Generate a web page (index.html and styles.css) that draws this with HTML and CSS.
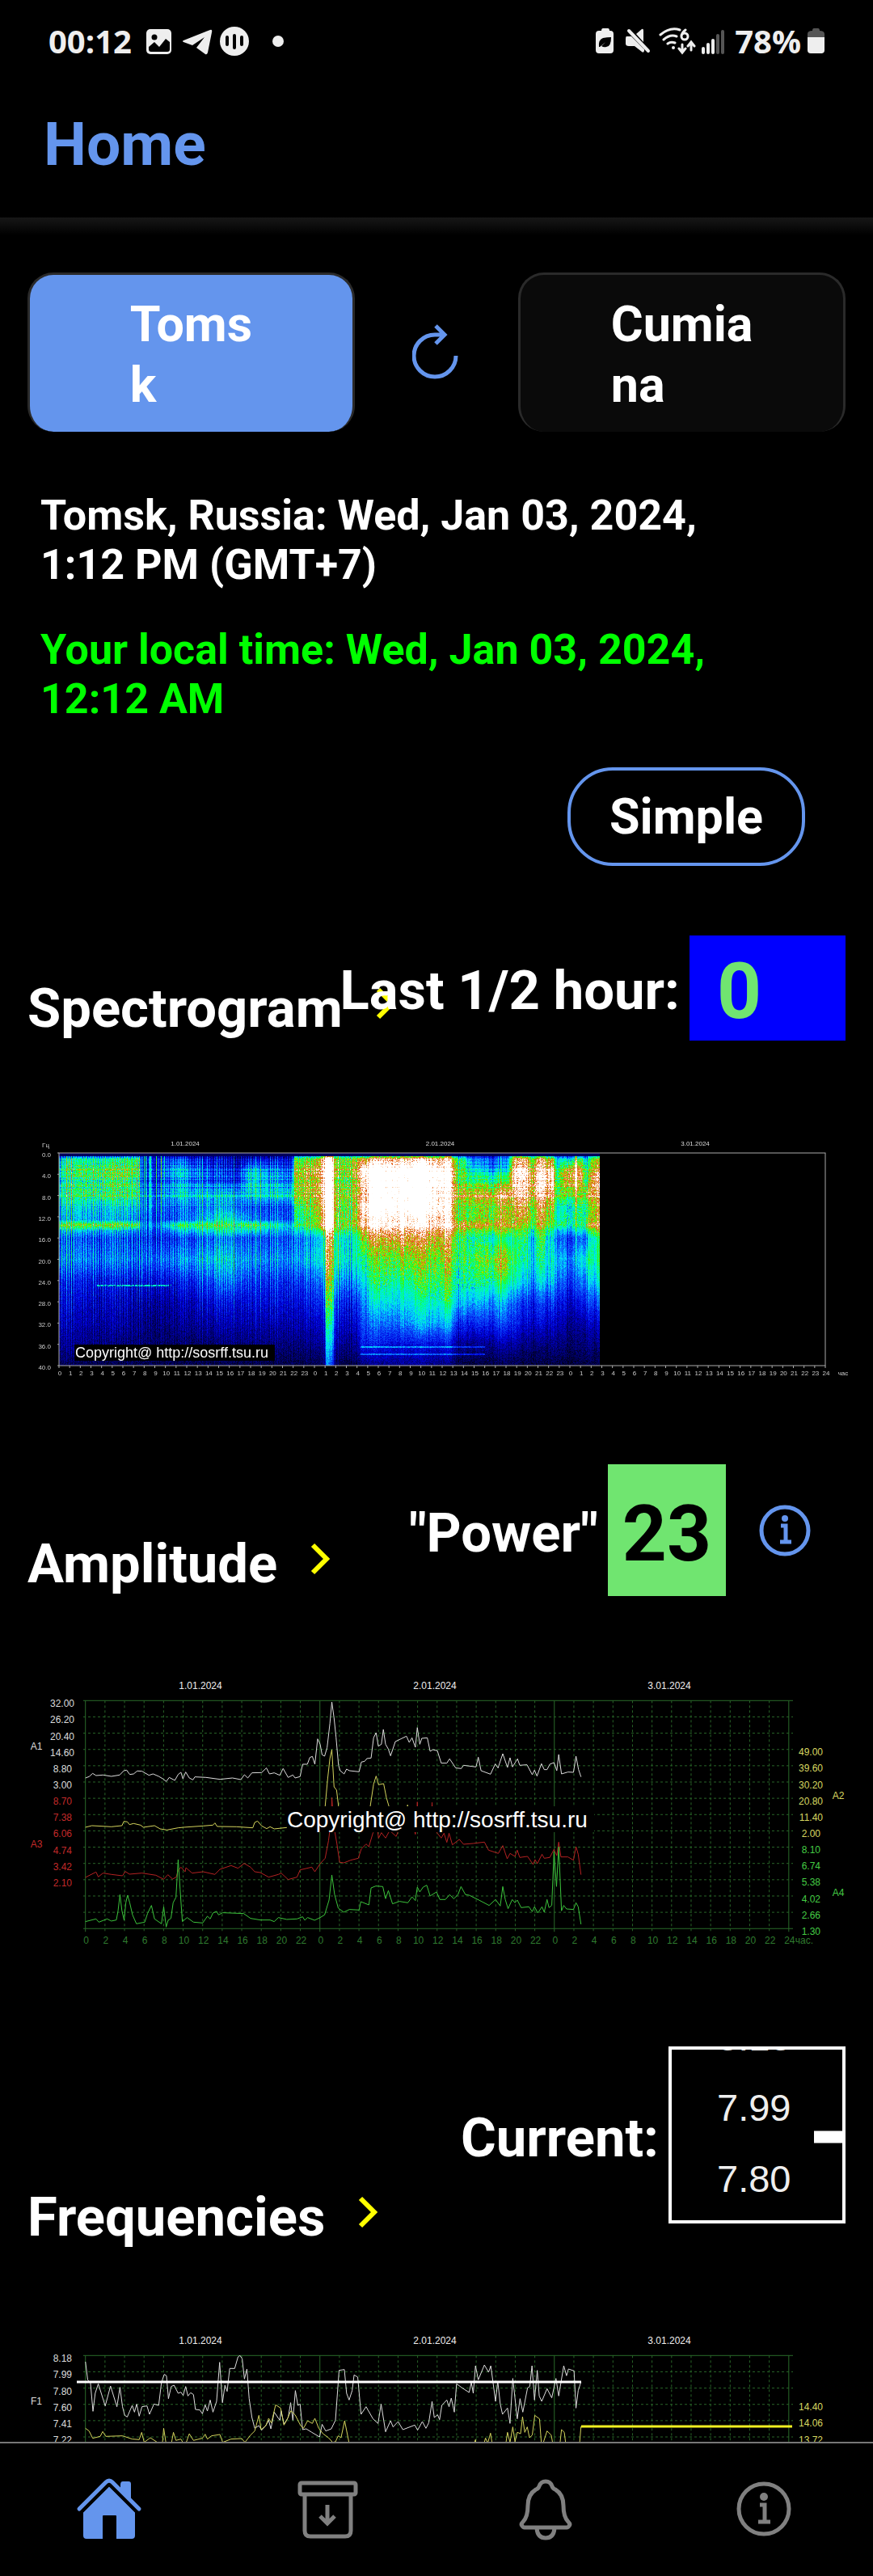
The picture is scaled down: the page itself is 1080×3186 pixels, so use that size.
FILE: index.html
```html
<!DOCTYPE html>
<html lang="en">
<head>
	<meta charset="UTF-8">
	<meta name="viewport" content="width=device-width">
	<title>Home</title>
	<link rel="stylesheet" href="styles.css">
</head>
<body>
	<div class="screen">
		<div class="status">
			<div class="status-side">
				<span class="status-text">00:12</span>
				<svg class="status-notes" width="172" height="40" viewBox="0 0 172 40">
					<rect x="0" y="5" width="31" height="31" rx="5"/>
					<circle class="hole" cx="10" cy="15" r="3.500"/>
					<path class="hole" d="M3 27l7-6 6 6 8-10 5 4v9q0 3-3 3H6q-3 0-3-3z"/>
					<path d="M46 19L79 6q3-1 2 3l-5 25q-1 3-3 2l-11-8 10-13-15 10-11-4q-2-1 0-2z"/>
					<circle cx="109" cy="20" r="18"/>
					<path class="bars" d="M100 15v9M109 13v15M118 15v9"/>
					<circle cx="163" cy="20" r="7"/>
				</svg>
			</div>
			<div class="status-side">
				<svg width="164" height="36" viewBox="0 0 164 36">
					<path d="M9 2h6q2 0 2 3h1q4 0 4 4v20q0 4-4 4H4q-4 0-4-4V9q0-4 4-4h3q0-3 2-3z"/>
					<path class="hole" d="M4 25q-1-9 5-11 5-1 10-1 0 12-6 12-3 1-6-1l5-5-7 6z"/>
					<path d="M38 12h6l16 16v2q-1 3-3 1l-9-7h-7q-4 0-4-3v-6q0-3 1-3zM50 9l7-6q2-1 2 2v14z"/>
					<path class="thin" d="M41 5l24 25"/>
					<path class="thin wifi" d="M80 10q12-10 24-6M84 16q8-7 16-4M89 21q4-3 9-1M111 4q-5 4-5 8m0 0a4 4 0 1 0 8 0 4 4 0 1 0-8 0M107 22v9m-4-4l4 5 4-5M118 29v-9m-4 4l4-5 4 5"/>
					<circle cx="96" cy="26" r="2"/>
					<path class="thin" d="M133 27v5M139 22v10M145 17v15"/>
					<path class="thin dim" d="M151 11v21M157 6v26"/>
				</svg>
				<span class="status-text">78%</span>
				<svg width="21" height="36" viewBox="0 0 21 36">
					<path class="dim-fill" d="M0 14V9q0-4 6-4 0-3 2-3h5q2 0 2 3 6 0 6 4v5z"/>
					<path d="M0 13h21v16q0 4-4 4H4q-4 0-4-4z"/>
				</svg>
			</div>
		</div>

		<header class="header">
			<h1>Home</h1>
		</header>

		<main class="content">
			<div class="stations">
				<button class="station active" type="button"><span>Toms<br>k</span></button>
				<button class="refresh" type="button" aria-label="Refresh">
					<svg width="60" height="70" viewBox="0 0 60 70">
						<path d="M54 39a26 26 0 1 1-26-26h11M29 2l11 11-11 11"/>
					</svg>
				</button>
				<button class="station" type="button"><span>Cumia<br>na</span></button>
			</div>

			<div class="times">
				<p>Tomsk, Russia: Wed, Jan 03, 2024,<br>1:12 PM (GMT+7)</p>
				<p class="local">Your local time: Wed, Jan 03, 2024,<br>12:12 AM</p>
			</div>

			<div class="mode">
				<button class="simple" type="button">Simple</button>
			</div>

			<section>
				<div class="section-head">
					<h2><a href="#spectrogram">Spectrogram <svg class="chevron" width="26" height="42" viewBox="0 0 26 42"><path d="M4 4l17 17L4 38"/></svg></a></h2>
					<div class="reading">
						<span class="label">Last 1/2 hour:</span>
						<span class="value blue">0</span>
					</div>
				</div>
				<svg class="chart" id="spectrogram" viewBox="0 -13 1080 364">
					<foreignObject x="73" y="46" width="669" height="263">
						<canvas id="heat" width="669" height="263"></canvas>
					</foreignObject>
					<rect class="frame" x="73" y="46" width="948" height="263"/>
					<g id="spectrogram-axis"></g>
					<rect x="92" y="283" width="248" height="20"/>
					<text class="copy small" x="93" y="299">Copyright@ http://sosrff.tsu.ru</text>
				</svg>
			</section>

			<section>
				<div class="section-head">
					<h2><a href="#amplitude">Amplitude <svg class="chevron" width="26" height="42" viewBox="0 0 26 42"><path d="M4 4l17 17L4 38"/></svg></a></h2>
					<div class="reading power">
						<span class="label">"Power"</span>
						<span class="value green">23</span>
						<button class="info" type="button" aria-label="About power">
							<svg width="66" height="66" viewBox="0 0 66 66">
								<circle class="ring" cx="33" cy="33" r="29"/>
								<circle cx="33" cy="18" r="4"/>
								<path class="stem" d="M28 27h6v20M27 47h14"/>
							</svg>
						</button>
					</div>
				</div>
				<svg class="chart" id="amplitude" viewBox="0 -6 1080 397">
					<g id="amplitude-grid"></g>
					<g class="traces" transform="scale(.3444 .3333)">
						<polyline class="red" points="307,786 345,766 353,784 370,770 400,775 440,780 450,764 465,774 510,770 560,778 588,793 603,776 620,792 633,785 640,760 650,748 665,765 668,750 690,770 730,765 772,775 790,756 830,742 855,752 877,734 900,748 915,765 935,768 965,785 1000,775 1010,770 1035,794 1067,785 1078,758 1120,748 1131,765 1150,735 1168,715 1180,650 1190,570 1192,490 1200,600 1210,660 1220,730 1235,732 1260,722 1287,715 1298,680 1315,662 1325,672 1340,620 1355,605 1360,640 1370,620 1385,640 1400,612 1423,634 1432,610 1488,612 1492,626 1496,600 1499,506 1503,600 1549,600 1552,508 1556,600 1571,622 1585,640 1595,622 1605,656 1613,622 1625,665 1650,645 1665,663 1700,660 1740,655 1755,685 1790,697 1806,668 1822,717 1832,697 1850,708 1858,685 1867,712 1895,708 1915,738 1922,720 1930,735 1947,700 1955,715 1975,712 1990,682 2000,705 2007,655 2015,710 2040,710 2060,722 2069,672 2077,700 2087,776"/>
						<polyline class="yellow" points="307,600 330,594 400,598 438,594 445,578 458,580 465,590 480,586 505,592 515,600 555,594 575,606 600,610 640,602 660,600 730,595 765,592 772,584 780,597 850,598 908,602 915,582 925,577 940,595 958,605 970,598 985,606 1030,601 1160,600 1168,522 1177,420 1185,345 1192,312 1200,450 1209,462 1216,522 1230,600 1310,600 1330,522 1342,440 1351,410 1360,442 1378,438 1388,490 1397,522 1410,600 1455,600 1464,517 1472,600"/>
						<polyline class="white" points="307,417 320,412 333,400 345,408 370,406 400,411 430,406 445,390 455,388 466,404 480,402 493,391 510,392 535,407 550,402 570,411 585,420 597,430 608,415 628,426 640,404 650,396 657,420 667,395 680,417 693,424 700,413 740,415 790,422 835,417 865,423 878,405 890,417 905,398 940,397 957,380 968,402 985,398 1005,407 1017,382 1035,415 1052,406 1060,417 1078,412 1087,366 1104,366 1113,341 1122,337 1131,366 1141,272 1150,292 1157,331 1166,336 1175,304 1185,215 1192,135 1200,195 1207,265 1216,370 1222,390 1236,402 1245,384 1255,390 1290,394 1298,358 1310,355 1318,345 1333,343 1342,268 1351,249 1359,299 1370,292 1377,237 1385,292 1395,310 1403,335 1420,282 1440,272 1460,262 1470,285 1480,268 1492,303 1499,230 1508,292 1515,270 1535,268 1545,318 1555,312 1571,316 1585,362 1605,362 1615,346 1637,380 1657,382 1665,370 1710,376 1718,340 1728,390 1762,403 1779,365 1789,380 1806,327 1823,378 1832,342 1841,376 1859,346 1867,370 1893,368 1912,405 1920,388 1929,410 1945,364 1955,386 1965,386 1975,366 1990,360 2000,390 2007,330 2017,402 2040,395 2060,396 2069,336 2078,385 2087,413"/>
						<polyline class="lime" points="307,950 345,940 355,952 385,940 400,948 418,944 424,910 431,850 438,910 446,945 452,880 458,852 466,880 476,925 490,958 520,952 530,920 544,890 555,940 580,958 588,895 597,970 604,945 614,938 622,880 632,860 640,720 647,830 655,950 672,935 695,952 728,955 745,930 755,940 765,918 778,912 785,925 800,917 875,920 900,938 935,944 970,944 985,950 1000,935 1030,942 1067,940 1087,932 1095,945 1105,935 1130,945 1150,935 1166,925 1182,870 1192,777 1202,850 1215,900 1235,915 1255,905 1290,907 1296,876 1325,888 1333,825 1350,818 1375,820 1385,865 1395,835 1410,884 1435,875 1465,880 1480,858 1492,872 1499,822 1508,840 1520,822 1533,815 1545,855 1568,840 1580,868 1600,868 1615,850 1630,865 1645,850 1656,820 1672,850 1685,852 1720,870 1757,890 1780,868 1797,892 1806,820 1815,868 1825,902 1840,868 1850,880 1858,870 1872,898 1900,895 1912,913 1920,895 1932,918 1947,895 1955,915 1965,868 1972,898 1982,890 1990,690 1999,820 2007,672 2017,910 2025,890 2035,903 2060,905 2069,880 2077,895 2087,960"/>
					</g>
					<rect x="355" y="174" width="380" height="32"/>
					<text class="copy" x="355" y="200">Copyright@ http://sosrff.tsu.ru</text>
				</svg>
			</section>

			<section>
				<div class="section-head">
					<h2><a href="#frequencies">Frequencies <svg class="chevron" width="26" height="42" viewBox="0 0 26 42"><path d="M4 4l17 17L4 38"/></svg></a></h2>
					<div class="reading current">
						<span class="label">Current:</span>
						<svg class="magnifier" width="219" height="219" viewBox="0 0 219 219">
							<text x="60" y="5">8.18</text>
							<text x="60" y="92">7.99</text>
							<text x="60" y="180">7.80</text>
							<path d="M180 112h36"/>
							<rect x="2" y="2" width="215" height="215"/>
						</svg>
					</div>
				</div>
				<svg class="chart" id="frequencies" viewBox="0 2 1080 180">
					<g id="frequencies-grid"></g>
					<g class="traces" transform="scale(.3444 .3333)">
						<polyline class="white" points="307,183 315,250 325,262 334,367 342,300 353,265 378,347 397,273 420,350 431,278 440,350 448,382 457,388 475,345 483,370 491,340 500,385 510,350 528,347 537,378 553,340 570,345 580,260 590,230 598,235 605,320 615,275 625,270 640,300 650,296 658,308 667,275 675,310 685,298 695,305 702,360 718,362 727,376 737,343 745,366 755,325 765,370 778,330 789,185 799,335 808,270 816,293 825,208 843,208 855,165 862,160 870,172 878,247 887,210 895,320 905,390 915,430 930,420 940,437 955,420 965,400 973,432 985,370 1005,400 1010,365 1020,415 1035,390 1044,335 1052,400 1061,290 1070,345 1078,340 1087,435 1100,432 1120,445 1148,462 1157,415 1170,440 1190,432 1205,400 1218,215 1237,212 1245,300 1254,325 1265,290 1272,232 1285,240 1297,378 1315,350 1340,395 1358,412 1369,340 1385,443 1403,402 1412,425 1430,405 1447,435 1490,418 1500,437 1517,405 1530,430 1540,410 1552,330 1560,390 1572,380 1579,398 1587,345 1605,325 1613,350 1621,318 1632,370 1640,265 1660,280 1685,297 1693,260 1700,300 1708,198 1718,250 1740,195 1755,222 1763,198 1780,330 1788,255 1797,340 1805,378 1823,355 1832,412 1842,245 1858,395 1868,320 1878,370 1895,280 1903,275 1911,198 1920,325 1930,215 1937,310 1946,330 1965,283 1982,317 1997,245 2007,310 2025,198 2035,235 2042,210 2062,217 2069,355 2077,290 2087,258"/>
						<polyline class="yellow" points="307,430 320,440 333,467 360,460 369,442 380,460 440,458 475,470 500,472 509,445 518,482 540,465 565,482 583,490 588,430 597,490 615,490 623,445 632,475 650,470 658,485 670,480 680,450 695,475 727,467 737,452 745,470 760,458 790,453 800,482 830,470 868,468 880,482 900,455 915,440 930,382 938,435 955,420 965,393 975,410 990,343 1008,355 1020,418 1030,400 1045,365 1060,380 1080,420 1090,430 1105,402 1122,412 1131,393 1145,430 1160,450 1180,465 1195,482 1205,480 1215,458 1225,465 1238,402 1255,490 1280,520 1690,520 1708,472 1714,520 1735,500 1744,466 1752,485 1762,448 1770,500 1800,500 1818,480 1823,445 1832,482 1842,425 1850,480 1858,445 1870,450 1877,387 1885,445 1894,425 1902,465 1912,455 1921,382 1938,395 1945,490 1952,482 1965,440 1980,455 1988,500 2010,500 2017,435 2027,445 2035,510 2080,510 2087,423"/>
					</g>
					<path class="mark" d="M95 86h624"/>
					<path class="mark gold" d="M719 141h261"/>
				</svg>
			</section>
		</main>

		<nav class="tabs">
			<a class="active" href="#home" aria-label="Home">
				<svg width="84" height="80" viewBox="0 0 84 80">
					<path d="M10 44L42 12l32 32v29q0 4-4 4H51V49q0-1-1-1H35q-1 0-1 1v28H14q-4 0-4-4z"/>
					<path class="gap" d="M5 46L42 9l38 38"/>
					<path d="M56 10q0-4 3-4h7q3 0 3 3v22L56 18z"/>
					<path class="roof" d="M5 40L38 7q4-4 8 0l33 33"/>
				</svg>
			</a>
			<a href="#archive" aria-label="Archive">
				<svg class="line" width="84" height="80" viewBox="0 0 84 80">
					<rect x="8" y="8" width="69" height="14" rx="2"/>
					<path d="M14 22v45q0 7 7 7h43q7 0 7-7V22M42 35v22M33 49l9 9 9-9"/>
				</svg>
			</a>
			<a href="#alerts" aria-label="Alerts">
				<svg class="line" width="84" height="80" viewBox="0 0 84 80">
					<path d="M42 6q-6 0-8 6-1 3-4 4-10 6-10 20 0 14-6 20-3 3-1 5 1 2 3 2h52q2 0 3-2 2-2-1-5-6-6-6-20 0-14-10-20-3-1-4-4-2-6-8-6zM31 64q1 12 11 12t11-12"/>
				</svg>
			</a>
			<a href="#about" aria-label="About">
				<svg class="line" width="84" height="80" viewBox="0 0 84 80">
					<circle cx="42" cy="40" r="31"/>
					<circle class="dot" cx="42" cy="25" r="5"/>
					<path d="M37 35h6v20M35 56h15"/>
				</svg>
			</a>
		</nav>
	</div>
	<script src="charts.js"></script>
</body>
</html>
```
FILE: styles.css
```css
* {
	box-sizing: border-box;
}
body {
	margin: 0;
	background: #000;
	color: #fff;
	font-family: Roboto, "Liberation Sans", sans-serif;
	font-weight: 700;
}
button {
	font: inherit;
	color: inherit;
	background: none;
	border: 0;
	padding: 0;
}
a {
	color: inherit;
	text-decoration: none;
}
h1, h2, p {
	margin: 0;
}
svg {
	display: block;
}
.screen {
	display: flex;
	flex-direction: column;
	height: 100vh;
	overflow: hidden;
}

/* status bar */
.status {
	display: flex;
	justify-content: space-between;
	flex: none;
	padding: 31px 60px 0;
	height: 100px;
}
.status-side {
	display: flex;
	align-items: center;
	height: 40px;
	gap: 8px;
}
.status-side svg {
	fill: #eee;
}
.status-side .status-notes {
	margin-left: 10px;
}
.status-text {
	font-family: "Open Sans", "Noto Sans", sans-serif;
	font-size: 40px;
	line-height: 40px;
	color: #eee;
}
.status-side .hole {
	fill: #000;
}
.bars {
	stroke: #000;
	stroke-width: 4;
	stroke-linecap: round;
}
.thin {
	fill: none;
	stroke: #eee;
	stroke-width: 4;
	stroke-linecap: round;
}
.wifi {
	stroke-width: 3;
}
.dim {
	stroke: #555;
}
.status-side .dim-fill {
	fill: #555;
}

/* header */
.header {
	display: flex;
	align-items: center;
	height: 169px;
	padding: 0 54px 14px;
	flex: none;
}
.header h1 {
	color: #6495ed;
	font-size: 75px;
	line-height: 88px;
}
.content {
	flex: 1;
	min-height: 0;
	overflow: hidden;
	padding-top: 68px;
	background: linear-gradient(#171717, #000 22px);
}

/* top controls */
.stations {
	display: grid;
	grid-template-columns: 2fr 1fr 2fr;
	padding: 0 34px;
}
.station {
	display: flex;
	align-items: center;
	justify-content: center;
	height: 197px;
	padding-top: 4px;
	border: 3px solid #2a2a2a;
	border-bottom: 0;
	border-radius: 32px;
	background: #0a0a0a;
	font-size: 61px;
	line-height: 75px;
	text-align: left;
}
.station.active {
	background: #6495ed;
}
.refresh {
	display: flex;
	align-items: center;
	justify-content: center;
}
.refresh path {
	fill: none;
	stroke: #6495ed;
	stroke-width: 5;
}
.times {
	padding: 73px 50px 0;
	font-size: 52px;
	line-height: 61px;
}
.times p {
	margin-bottom: 44px;
}
.times .local {
	color: #0f0;
}
.mode {
	display: flex;
	justify-content: flex-end;
	padding: 10px 84px 0;
	margin-bottom: 86px;
}
.simple {
	padding: 0 48px;
	height: 122px;
	border: 4px solid #6495ed;
	border-radius: 56px;
	font-size: 61px;
}

/* sections */
section {
	margin-bottom: 80px;
}
.section-head {
	display: grid;
	align-items: end;
	padding: 0 34px;
	margin-bottom: 80px;
}
.section-head > * {
	grid-area: 1 / 1;
}
.section-head h2 {
	justify-self: start;
	font-size: 67px;
	line-height: 80px;
}
.section-head h2 a {
	display: flex;
	align-items: center;
	gap: 40px;
}
.chevron {
	margin-bottom: 12px;
}
.chevron path {
	fill: none;
	stroke: #ff0;
	stroke-width: 6;
}
.reading {
	justify-self: end;
	display: flex;
	align-items: center;
	gap: 12px;
}
.label {
	padding-top: 6px;
	font-size: 67px;
}
.value {
	display: flex;
	align-items: center;
	padding-top: 8px;
	font-size: 96px;
}
.blue {
	width: 193px;
	height: 130px;
	padding-left: 34px;
	background: #00f;
	color: #70e570;
}
.green {
	height: 163px;
	padding: 8px 18px 0;
	background: #70e570;
	color: #000;
}
.power {
	padding-right: 42px;
}
.info {
	margin-left: 28px;
}
.info svg {
	fill: #6495ed;
}
.info .ring, .stem {
	fill: none;
	stroke: #6495ed;
	stroke-width: 5;
}
.current {
	margin-bottom: 32px;
}
.magnifier text {
	font: 47px "Liberation Sans", sans-serif;
	fill: #eee;
}
.magnifier path {
	stroke: #fff;
	stroke-width: 15;
}
.magnifier rect {
	fill: none;
	stroke: #fff;
	stroke-width: 4;
}

/* charts */
.chart {
	width: 100%;
	height: auto;
	font: 12px "Liberation Sans", sans-serif;
}
.chart canvas {
	display: block;
}
.chart .tiny {
	font-size: 8px;
}
.frame {
	fill: none;
	stroke: #aaa;
}
.tick {
	stroke: #aaa;
}
.copy {
	font-size: 28px;
	fill: #fff;
}
.small {
	font-size: 18px;
}
.grid {
	fill: none;
	stroke: #2a6b2a;
}
.dash {
	stroke: #286428;
	stroke-dasharray: 3 3;
}
.traces polyline {
	fill: none;
	stroke-width: 1;
	vector-effect: non-scaling-stroke;
}
.white {
	stroke: #ddd;
}
.yellow {
	stroke: #d4d45c;
}
.red {
	stroke: #b42222;
}
.lime {
	stroke: #3cc43c;
}
.mark {
	stroke: #fff;
	stroke-width: 3;
}
.gold {
	stroke: #f0f020;
}

/* bottom tabs */
.tabs {
	display: flex;
	flex: none;
	height: 166px;
	border-top: 2px solid #777;
}
.tabs a {
	flex: 1;
	display: flex;
	justify-content: center;
	padding-top: 41px;
	color: #808080;
}
.tabs .active {
	color: #6495ed;
}
.tabs svg {
	fill: currentColor;
}
.tabs .roof {
	fill: none;
	stroke: currentColor;
	stroke-width: 5;
	stroke-linecap: round;
}
.tabs .gap {
	fill: none;
	stroke: #000;
	stroke-width: 5;
}
.tabs .line {
	fill: none;
	stroke: currentColor;
	stroke-width: 5;
}
.tabs .line .dot {
	fill: currentColor;
	stroke: none;
}
```
FILE: charts.js
```js
var NS = 'http://www.w3.org/2000/svg';
var days = ['1.01.2024', '2.01.2024', '3.01.2024'];

function add(parent, name, attrs, text) {
	var el = document.createElementNS(NS, name);
	for (var k in attrs) {
		el.setAttribute(k, attrs[k]);
	}
	if (text !== undefined) {
		el.textContent = text;
	}
	parent.appendChild(el);
}

function label(g, x, y, text, fill, anchor, cls) {
	add(g, 'text', {x: x, y: y, fill: fill, 'text-anchor': anchor || 'middle', 'class': cls || ''}, text);
}

// spectrogram axes
var axis = document.getElementById('spectrogram-axis');
var i, x, y;
label(axis, 61, 39, 'Гц', '#ccc', 'end', 'tiny');
for (i = 0; i <= 10; i++) {
	y = 46 + i * 26.3;
	add(axis, 'path', {'class': 'tick', d: 'M71 ' + y + 'h2'});
	label(axis, 63, y + 5, (i * 4).toFixed(1), '#ccc', 'end', 'tiny');
}
for (i = 0; i <= 72; i++) {
	x = 73 + i * 948 / 72;
	add(axis, 'path', {'class': 'tick', d: 'M' + x + ' 309v3'});
	label(axis, x + 1, 321, i === 72 ? 24 : i % 24, '#ccc', 'middle', 'tiny');
}
label(axis, 1043, 321, 'час', '#ccc', 'middle', 'tiny');
days.forEach(function(d, n) {
	label(axis, 229 + n * 315.500, 37, d, '#ddd', 'middle', 'tiny');
});

// green grid shared by the two line charts
function grid(id, top, rows, left, right) {
	var g = document.getElementById(id);
	var bottom = top + rows * 20.14;
	var i, x, y;
	for (i = 0; i <= 36; i++) {
		x = 105.700 + i * 24.170;
		add(g, 'path', {'class': i % 12 ? 'grid dash' : 'grid', d: 'M' + x + ' ' + top + 'V' + (bottom + 4)});
	}
	for (i = 0; i <= rows; i++) {
		y = top + i * 20.14;
		add(g, 'path', {'class': i % 14 ? 'grid dash' : 'grid', d: 'M103 ' + y + 'H981'});
	}
	days.forEach(function(d, n) {
		label(g, 248 + n * 290, top - 14, d, '#eee');
	});
	left.forEach(function(v, n) {
		label(g, v.length > 4 ? 92 : 89, top + 8 + n * 20.14, v, n < 6 ? '#ddd' : '#c42a2a', 'end');
	});
	right.forEach(function(v, n) {
		label(g, v.length > 4 ? 1018 : 1015, top + 68 + n * 20.14, v, n < 6 ? '#d8d860' : '#44cc44', 'end');
	});
	return g;
}

var g = grid('amplitude-grid', 43.300, 14,
	['32.00', '26.20', '20.40', '14.60', '8.80', '3.00', '8.70', '7.38', '6.06', '4.74', '3.42', '2.10'],
	['49.00', '39.60', '30.20', '20.80', '11.40', '2.00', '8.10', '6.74', '5.38', '4.02', '2.66', '1.30']);
for (i = 0; i <= 36; i++) {
	label(g, 106.700 + i * 24.170, 344, i === 36 ? 24 : i * 2 % 24, '#2f7a2f');
}
label(g, 995, 344, 'час.', '#2f7a2f');
label(g, 45, 104, 'A1', '#ddd');
label(g, 45, 225, 'A3', '#c42a2a');
label(g, 1037, 165, 'A2', '#d8d860');
label(g, 1037, 285, 'A4', '#44cc44');

g = grid('frequencies-grid', 53.300, 6,
	['8.18', '7.99', '7.80', '7.60', '7.41', '7.22'],
	['14.40', '14.06', '13.72']);
label(g, 45, 114, 'F1', '#ddd');

// spectrogram heat map: one row per hour mark, one column per frequency
var freqs = [0, 1, 3, 5, 8, 10, 12.5, 13.5, 14.5, 16, 20, 24, 28, 32, 36, 40];
var levels = [
	[0,    .10, .30, .42, .36, .46, .36, .34, .60, .38, .28, .34, .22, .18, .15, .12, .06],
	[0.7,  .10, .44, .54, .48, .54, .42, .38, .62, .40, .28, .34, .22, .18, .15, .12, .06],
	[5,    .10, .46, .60, .56, .57, .42, .38, .66, .40, .28, .34, .22, .17, .14, .10, .05],
	[7.5,  .10, .52, .60, .54, .56, .42, .36, .62, .36, .26, .33, .20, .15, .12, .10, .05],
	[7.7,  .08, .22, .22, .22, .32, .28, .24, .30, .26, .22, .30, .20, .13, .10, .08, .05],
	[9.5,  .08, .22, .26, .24, .34, .28, .26, .34, .28, .22, .32, .20, .13, .10, .08, .05],
	[11,   .10, .26, .42, .38, .46, .32, .30, .56, .40, .26, .36, .22, .15, .12, .08, .05],
	[15,   .08, .14, .22, .24, .42, .34, .44, .58, .46, .30, .41, .30, .20, .14, .08, .05],
	[16.5, .08, .10, .18, .20, .40, .32, .44, .52, .46, .30, .40, .32, .20, .15, .10, .05],
	[18,   .08, .16, .40, .44, .46, .28, .34, .62, .44, .28, .36, .26, .20, .15, .10, .05],
	[21.9, .08, .16, .26, .30, .46, .26, .28, .40, .36, .28, .34, .24, .20, .15, .10, .05],
	[22.1, .14, .56, .68, .66, .68, .52, .50, .54, .44, .32, .36, .26, .20, .15, .10, .05],
	[24.3, .14, .60, .74, .70, .74, .66, .62, .66, .50, .36, .42, .30, .24, .17, .12, .05],
	[24.9, .40, .88, .96, .96, .96, .90, .85, .95, .68, .46, .46, .36, .26, .20, .14, .08],
	[25.1, .50, 1.0, 1.1, 1.1, 1.1, 1.1, 1.1, 1.1, .90, .80, .78, .68, .60, .52, .44, .38],
	[25.6, .50, 1.0, 1.1, 1.1, 1.1, 1.1, 1.1, 1.1, .90, .80, .74, .66, .60, .50, .42, .30],
	[26,   .20, .56, .62, .56, .64, .60, .58, .62, .52, .42, .44, .34, .24, .18, .12, .05],
	[28,   .20, .64, .72, .68, .72, .66, .66, .68, .58, .46, .46, .36, .24, .18, .12, .05],
	[28.4, .20, .74, 1.0, .94, .90, 1.0, .92, .94, .80, .70, .54, .46, .38, .32, .26, .10],
	[30,   .24, .84, 1.1, 1.1, 1.1, 1.1, .96, 1.0, .88, .76, .62, .55, .46, .34, .24, .12],
	[32,   .24, .76, .98, 1.0, 1.0, .98, .92, .92, .82, .74, .58, .48, .40, .32, .20, .12],
	[34,   .24, .86, 1.1, 1.1, 1.1, 1.1, .94, .96, .84, .76, .64, .56, .48, .40, .22, .12],
	[36.6, .24, .78, .96, .96, .92, .90, .88, .92, .80, .72, .64, .58, .50, .38, .22, .10],
	[37.6, .20, .56, .64, .64, .80, .64, .68, .82, .72, .60, .60, .52, .44, .28, .14, .05],
	[39,   .14, .34, .46, .56, .80, .66, .66, .80, .64, .54, .62, .56, .42, .27, .13, .04],
	[42,   .12, .20, .26, .46, .74, .58, .62, .64, .56, .40, .60, .48, .32, .24, .12, .04],
	[42.7, .30, .66, .80, .84, .76, .66, .64, .66, .54, .44, .48, .42, .28, .22, .12, .04],
	[43.6, .30, .84, .98, .96, .94, .84, .78, .70, .66, .58, .52, .44, .28, .20, .11, .04],
	[44.3, .20, .60, .76, .80, .78, .64, .64, .62, .50, .40, .46, .38, .26, .20, .11, .04],
	[45.2, .30, .84, .94, 1.0, .94, .82, .78, .76, .68, .62, .54, .46, .30, .22, .11, .04],
	[46.4, .20, .60, .86, .88, .80, .68, .60, .58, .46, .38, .44, .40, .26, .18, .11, .04],
	[46.7, .14, .36, .46, .50, .58, .44, .46, .54, .38, .30, .38, .32, .22, .16, .10, .04],
	[47.9, .14, .46, .80, .84, .70, .52, .54, .56, .44, .32, .40, .32, .22, .15, .10, .04],
	[49,   .14, .56, .78, .80, .66, .56, .56, .56, .46, .34, .46, .36, .24, .15, .10, .04],
	[49.6, .14, .36, .48, .52, .70, .52, .54, .66, .46, .32, .48, .36, .26, .16, .10, .04],
	[50.3, .24, .66, .80, .88, .84, .72, .74, .84, .66, .50, .50, .42, .28, .17, .10, .04],
	[50.9, .20, .52, .70, .76, .76, .66, .66, .70, .60, .46, .50, .42, .28, .17, .10, .04]
];
var colors = [
	[0, 0, 0, 20], [.1, 0, 0, 110], [.22, 0, 0, 220], [.34, 10, 90, 255],
	[.45, 0, 225, 250], [.55, 0, 255, 140], [.64, 60, 245, 0], [.72, 190, 220, 0],
	[.8, 225, 80, 20], [.88, 250, 190, 140], [.93, 255, 255, 255], [2, 255, 255, 255]
];

function level(row, f) {
	var k = 0;
	while (k < freqs.length - 2 && f > freqs[k + 1]) {
		k++;
	}
	var t = (f - freqs[k]) / (freqs[k + 1] - freqs[k]);
	return row[k + 1] + (row[k + 2] - row[k + 1]) * t;
}

function color(v) {
	var k = 0;
	v = Math.max(0, Math.min(1.500, v));
	while (v > colors[k + 1][0]) {
		k++;
	}
	var a = colors[k], b = colors[k + 1], t = (v - a[0]) / (b[0] - a[0]);
	return [a[1] + (b[1] - a[1]) * t, a[2] + (b[2] - a[2]) * t, a[3] + (b[3] - a[3]) * t];
}

var seed = 7;
function rnd() {
	seed = (seed * 16807) % 2147483647;
	return seed / 2147483647;
}

var canvas = document.getElementById('heat');
var ctx = canvas.getContext('2d');
var img = ctx.createImageData(canvas.width, canvas.height);
var rowNoise = [];
var drift = 0;
for (y = 0; y < canvas.height; y++) {
	rowNoise.push((rnd() - .5) * .14);
}
for (x = 0; x < canvas.width; x++) {
	var h = x * 72 / 948;
	var k = 0;
	while (k < levels.length - 2 && h > levels[k + 1][0]) {
		k++;
	}
	var mix = (h - levels[k][0]) / (levels[k + 1][0] - levels[k][0]);
	drift = drift * .8 + (rnd() - .5) * .09;
	var streak = (rnd() - .5) * .12 + (h > 26 ? drift : drift * .3);
	var comb = x % 3 === 0 ? .07 + rnd() * .1 : 0;
	var spike = h > 7.7 && h < 10.6 && rnd() < .16 ? .3 : 0;
	// narrow burst just after the second midnight
	if (Math.abs(h - 48.500) < .12) {
		spike = .28;
	}
	for (y = 0; y < canvas.height; y++) {
		var f = y * 40 / canvas.height;
		var v = level(levels[k], f) * (1 - mix) + level(levels[k + 1], f) * mix;
		var fade = f < 20 ? 1 : Math.max(0, (44 - f) / 24);
		v += (rnd() - .5) * (v > .5 ? .22 : .1) + streak * fade + comb * fade * (h < 28 ? 1 : .3);
		v += spike * Math.max(0, 1 - f / 22) + (f < 10 && f > 1 ? rowNoise[y] : 0);
		if (f > 24.700 && f < 25 && h > 3.500 && h < 10.500 && rnd() < .7) {
			v = .5;
		}
		if (h > 28.300 && h < 40 && ((f > 36.200 && f < 36.600) || (f > 37.600 && f < 38))) {
			v += .16;
		}
		if (f < .5) {
			v = .08;
		}
		var c = color(v);
		var p = (y * canvas.width + x) * 4;
		img.data[p] = c[0];
		img.data[p + 1] = c[1];
		img.data[p + 2] = c[2];
		img.data[p + 3] = 255;
	}
}
ctx.putImageData(img, 0, 0);
```
